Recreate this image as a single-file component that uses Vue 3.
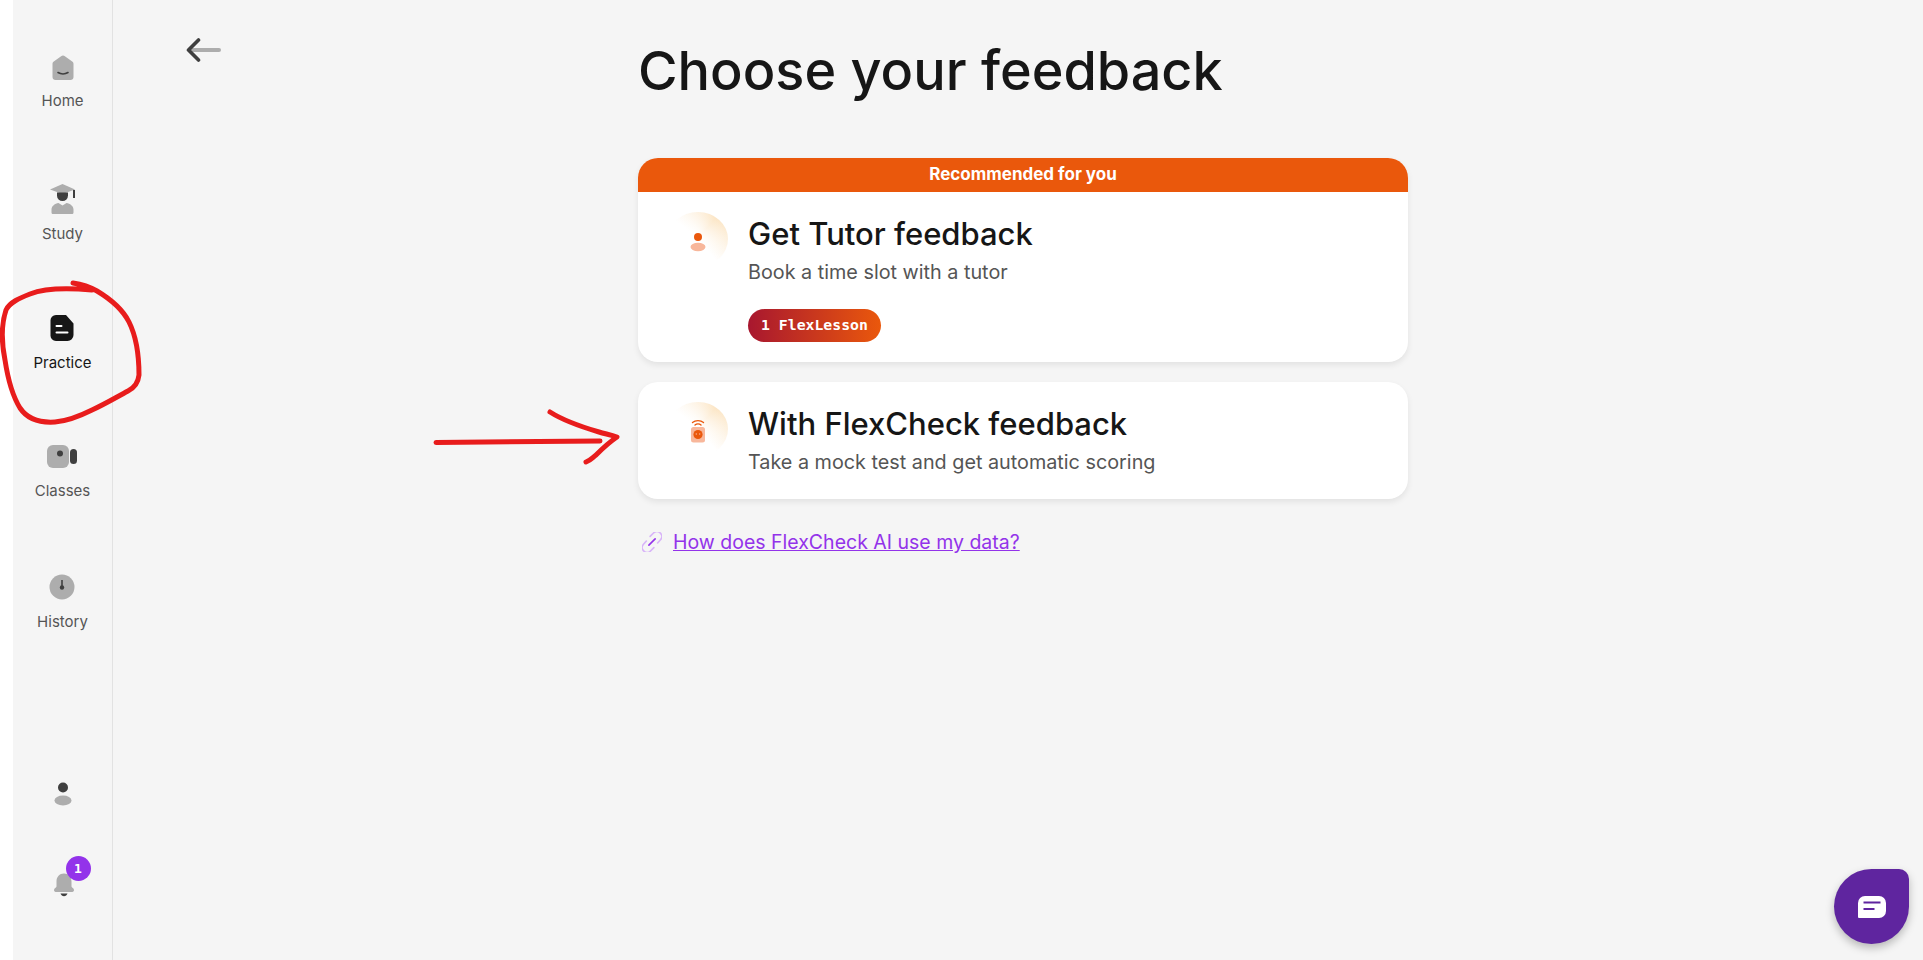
<script setup>
const navItems = [
  { key: 'home', label: 'Home' },
  { key: 'study', label: 'Study' },
  { key: 'practice', label: 'Practice', active: true },
  { key: 'classes', label: 'Classes' },
  { key: 'history', label: 'History' },
]
</script>

<template>
  <div class="page">
    <aside class="sidebar">
      <nav class="nav">
        <a v-for="item in navItems" :key="item.key" class="nav-item" :class="[item.key, { active: item.active }]">
          <svg v-if="item.key === 'home'" width="28" height="28" viewBox="0 0 28 28">
            <path d="M14 1.500c.7 0 1.300.2 1.900.7l7.300 5.300c.9.6 1.300 1.500 1.300 2.500v13c0 1.800-1.300 3-3 3H6.500c-1.700 0-3-1.200-3-3V10c0-1 .4-1.900 1.300-2.500l7.300-5.300c.6-.5 1.200-.7 1.900-.7z" fill="#adadad" />
            <path d="M9 18.500c2.800 1.800 7.200 1.800 10 0" fill="none" stroke="#3f3f3f" stroke-width="1.600" stroke-linecap="round" />
          </svg>
          <svg v-else-if="item.key === 'study'" width="28" height="32" viewBox="0 0 28 32">
            <path d="M1 6.500 13.500 1 26 6.500 13.500 11z" fill="#adadad" />
            <path d="M8 9.500h11v3a5.500 5.500 0 0 1-11 0z" fill="#3f3f3f" />
            <path d="M25 7v8" stroke="#3f3f3f" stroke-width="2" />
            <path d="M2.500 29.500v-3c0-3.500 3.500-6 7-6.500l4 2.500 4-2.500c3.500.5 7 3 7 6.500v3c0 1-.8 1.500-1.500 1.500H4c-.7 0-1.500-.5-1.500-1.500z" fill="#adadad" />
          </svg>
          <svg v-else-if="item.key === 'practice'" width="24" height="28" viewBox="0 0 24 28">
            <path d="M6 1h10l7.500 8.500V21a6 6 0 0 1-6 6H6a5.500 5.500 0 0 1-5.500-6V7A5.500 5.500 0 0 1 6 1z" fill="#161616" />
            <path d="M6.500 12h5M6.500 18.500h11" stroke="#fff" stroke-width="2" stroke-linecap="round" />
          </svg>
          <svg v-else-if="item.key === 'classes'" width="32" height="26" viewBox="0 0 32 26">
            <rect x="1" y="1" width="22" height="23" rx="6" fill="#adadad" />
            <circle cx="14" cy="9.500" r="3" fill="#3f3f3f" />
            <rect x="24" y="5" width="7" height="15" rx="3.500" fill="#3f3f3f" />
          </svg>
          <svg v-else width="26" height="26" viewBox="0 0 26 26">
            <circle cx="13" cy="13" r="12.500" fill="#adadad" />
            <path d="M13 6v7" stroke="#3f3f3f" stroke-width="1.600" />
            <circle cx="13" cy="13.500" r="2.200" fill="#3f3f3f" />
          </svg>
          <span class="nav-label">{{ item.label }}</span>
        </a>
      </nav>

      <div class="sidebar-bottom">
        <svg class="person" width="18" height="24" viewBox="0 0 18 24">
          <circle cx="9" cy="5.500" r="5" fill="#3f3f3f" />
          <ellipse cx="9" cy="18.500" rx="8.500" ry="5" fill="#adadad" />
        </svg>
        <div class="bell">
          <svg width="22" height="24" viewBox="0 0 22 24">
            <path d="M11 .5c4.500 0 7.500 3.500 7.500 8v5c0 1 2.500 1.500 2.500 3.500 0 1.500-1 2-2.500 2h-15C2 19 1 18.500 1 17c0-2 2.500-2.500 2.500-3.500v-5c0-4.500 3-8 7.500-8z" fill="#adadad" />
            <path d="M7.500 20.500h7c-.5 1.500-2 2.800-3.500 2.800s-3-1.300-3.500-2.800z" fill="#3f3f3f" />
          </svg>
          <span class="badge">1</span>
        </div>
      </div>
    </aside>

    <main class="main">
      <button class="back" aria-label="Back">
        <svg width="35" height="24" viewBox="0 0 35 24">
          <path d="M6 12h27" stroke="#adadad" stroke-width="4" stroke-linecap="round" />
          <path d="M12.500 2 2.500 12l10 10" fill="none" stroke="#3f3f3f" stroke-width="3.600" stroke-linecap="round" stroke-linejoin="round" />
        </svg>
      </button>

      <section class="content">
        <h1 class="title">Choose your feedback</h1>

        <div class="card recommended">
          <div class="card-banner">Recommended for you</div>
          <div class="card-body">
            <div class="avatar">
              <svg width="24" height="30" viewBox="0 0 24 30">
                <circle cx="12" cy="13" r="4" fill="#ea580c" />
                <ellipse cx="12" cy="23" rx="7.500" ry="4.200" fill="#f8b79b" />
              </svg>
            </div>
            <div class="card-text">
              <h2 class="card-title">Get Tutor feedback</h2>
              <p class="card-sub">Book a time slot with a tutor</p>
              <span class="pill">1 FlexLesson</span>
            </div>
          </div>
        </div>

        <div class="card">
          <div class="card-body">
            <div class="avatar">
              <svg width="26" height="34" viewBox="0 0 26 34">
                <rect x="6" y="15" width="14" height="15.500" rx="2.500" fill="#f8b79b" />
                <circle cx="13" cy="22.500" r="4.600" fill="#ea580c" />
                <circle cx="11.300" cy="22" r=".7" fill="#f8b79b" />
                <circle cx="14.700" cy="22" r=".7" fill="#f8b79b" />
                <path d="M7.500 10.500c3-2.500 8-2.500 11 0M10 13c1.600-1.300 4.400-1.300 6 0" fill="none" stroke="#ea580c" stroke-width="1.400" stroke-linecap="round" />
              </svg>
            </div>
            <div class="card-text">
              <h2 class="card-title">With FlexCheck feedback</h2>
              <p class="card-sub">Take a mock test and get automatic scoring</p>
            </div>
          </div>
        </div>

        <div class="data-link">
          <svg width="20" height="20" viewBox="2 2 16 16">
            <g fill="none" stroke="#d8b4f8" stroke-width="1.300" stroke-linecap="round">
              <path d="M8.500 5.500 11 3a3.800 3.800 0 0 1 5.800 5.200L14.500 10.800" />
              <path d="M11.500 14.500 9 17a3.800 3.800 0 0 1-5.800-5.200L5.500 9.200" />
              <path d="M7.500 12.500l5-5" stroke="#9333ea" />
            </g>
          </svg>
          <a class="link">How does FlexCheck AI use my data?</a>
        </div>
      </section>
    </main>

    <button class="chat" aria-label="Chat">
      <svg width="28" height="22" viewBox="0 0 28 22">
        <path d="M7 0h14a7 7 0 0 1 7 7v8a7 7 0 0 1-7 7H1a1 1 0 0 1-1-1V7a7 7 0 0 1 7-7z" fill="#fff" />
        <path d="M5.500 6.500h17M5.500 13h11" stroke="#5f259f" stroke-width="2" />
      </svg>
    </button>

    <!-- hand-drawn annotations on top of the screenshot -->
    <svg class="marks" width="1923" height="960" viewBox="0 0 1923 960">
      <g fill="none" stroke="#e81c1c" stroke-linecap="round" stroke-linejoin="round">
        <path stroke-width="5" d="M73 283C80 284 90 287 97 291C112 300 123 310 129 322C136 336 139 355 139 375C138 384 134 388 128 391C115 398 105 404 92 410C80 416 68 421 55 422C40 423 28 420 20 408C12 395 8 380 5 360C2 345 1 325 6 310C10 302 20 298 30 294C45 288 70 288 92 290" />
        <path stroke-width="5" d="M436 442.500c44 0 90-.5 164-1.500" />
        <path stroke-width="5" d="M550 412c14 9 32 15 49 20 7 2 12 3 18 5-9 6-15 12-21 18-4 3-5 5-10 7" />
      </g>
    </svg>
  </div>
</template>

<style>
html, body {
  margin: 0;
  background: #f5f5f5;
}
</style>

<style scoped>
.page {
  display: flex;
  height: 960px;
  overflow: hidden;
  position: relative;
  background: #f5f5f5;
  font-family: Inter, Lato, sans-serif;
}

.sidebar {
  flex: none;
  width: 99px;
  height: 100%;
  margin-left: 13px;
  border-right: 1px solid #e2e2e2;
  display: flex;
  flex-direction: column;
  justify-content: space-between;
  box-shadow: -13px 0 0 #fff;
}

.nav {
  display: flex;
  flex-direction: column;
  align-items: center;
  padding-top: 54px;
}

.nav-item {
  display: flex;
  flex-direction: column;
  align-items: center;
  height: 130px;
  color: #555;
  text-decoration: none;
}

.nav-item.home { height: 129px; }
.nav-item.study { height: 131px; }

.nav-item.active { color: #161616; }

.nav-label {
  margin-top: 9px;
  font-size: 15px;
  line-height: 20px;
}

.practice .nav-label,
.classes .nav-label { margin-top: 11px; }
.history .nav-label { margin-top: 12px; }

.sidebar-bottom {
  display: flex;
  flex-direction: column;
  align-items: center;
  padding-bottom: 63px;
}

.person { margin-bottom: 67px; }

.bell {
  position: relative;
  width: 22px;
  height: 24px;
  margin-left: 3px;
}

.bell svg { display: block; }

.badge {
  position: absolute;
  left: 12.500px;
  top: -17.500px;
  width: 25px;
  height: 25px;
  border-radius: 50%;
  background: #9333ea;
  color: #fff;
  font-family: "DejaVu Sans Mono", monospace;
  font-size: 13px;
  font-weight: 700;
  line-height: 25px;
  text-align: center;
}

.main {
  flex: 1;
  display: flex;
  align-items: flex-start;
  padding-left: 71px;
}

.back {
  flex: none;
  width: 38px;
  height: 26px;
  margin-top: 38px;
  padding: 0;
  border: none;
  background: none;
}

.content {
  width: 770px;
  margin-left: 416px;
  display: flex;
  flex-direction: column;
}

.title {
  margin: 33px 0 50px;
  font-size: 54px;
  font-weight: 500;
  line-height: 75px;
  color: #161616;
}

.card {
  border-radius: 20px;
  background: #fff;
  box-shadow: 0 3px 6px rgba(0, 0, 0, 0.08);
  overflow: hidden;
  margin-bottom: 20px;
}

.card-banner {
  height: 34px;
  background: #ea580c;
  color: #fff;
  font-size: 17px;
  font-weight: 700;
  line-height: 33px;
  text-align: center;
}

.card-body {
  display: flex;
  padding: 20px 34px 23px 30px;
  gap: 20px;
}

.recommended .card-body { padding-bottom: 20px; }

.avatar {
  flex: none;
  width: 60px;
  height: 54px;
  display: flex;
  align-items: center;
  justify-content: center;
  border-radius: 50%;
  background:
    radial-gradient(circle at 45% 50%, #fff 10%, rgba(255, 255, 255, 0) 85%),
    conic-gradient(from -50deg, #fff 0deg, #fbdfb6 90deg, #fff 190deg);
}

.card-text {
  display: flex;
  flex-direction: column;
  align-items: flex-start;
}

.card-title {
  margin: 0;
  font-size: 31px;
  font-weight: 500;
  line-height: 44px;
  color: #161616;
}

.card-sub {
  margin: 2px 0 0;
  font-size: 19.800px;
  line-height: 28px;
  color: #555;
}

.pill {
  margin-top: 23px;
  padding: 0 13px;
  height: 33px;
  border-radius: 17px;
  background: linear-gradient(90deg, #a8172f, #ea580c);
  color: #fff;
  font-family: "DejaVu Sans Mono", monospace;
  font-size: 14.800px;
  font-weight: 700;
  line-height: 32px;
}

.data-link {
  display: flex;
  align-items: center;
  gap: 11px;
  margin-top: 9px;
}

.data-link svg { margin-left: 4px; }

.link {
  font-size: 19.500px;
  line-height: 28px;
  color: #9333ea;
  text-decoration: underline;
}

.chat {
  position: absolute;
  left: 1834px;
  top: 869px;
  width: 75px;
  height: 75px;
  padding: 0;
  border: none;
  border-radius: 50% 10px 50% 50%;
  background: #5f259f;
  box-shadow: 0 4px 8px rgba(0, 0, 0, 0.25);
  display: flex;
  align-items: center;
  justify-content: center;
}

.marks {
  position: absolute;
  left: 0;
  top: 0;
  pointer-events: none;
}
</style>
